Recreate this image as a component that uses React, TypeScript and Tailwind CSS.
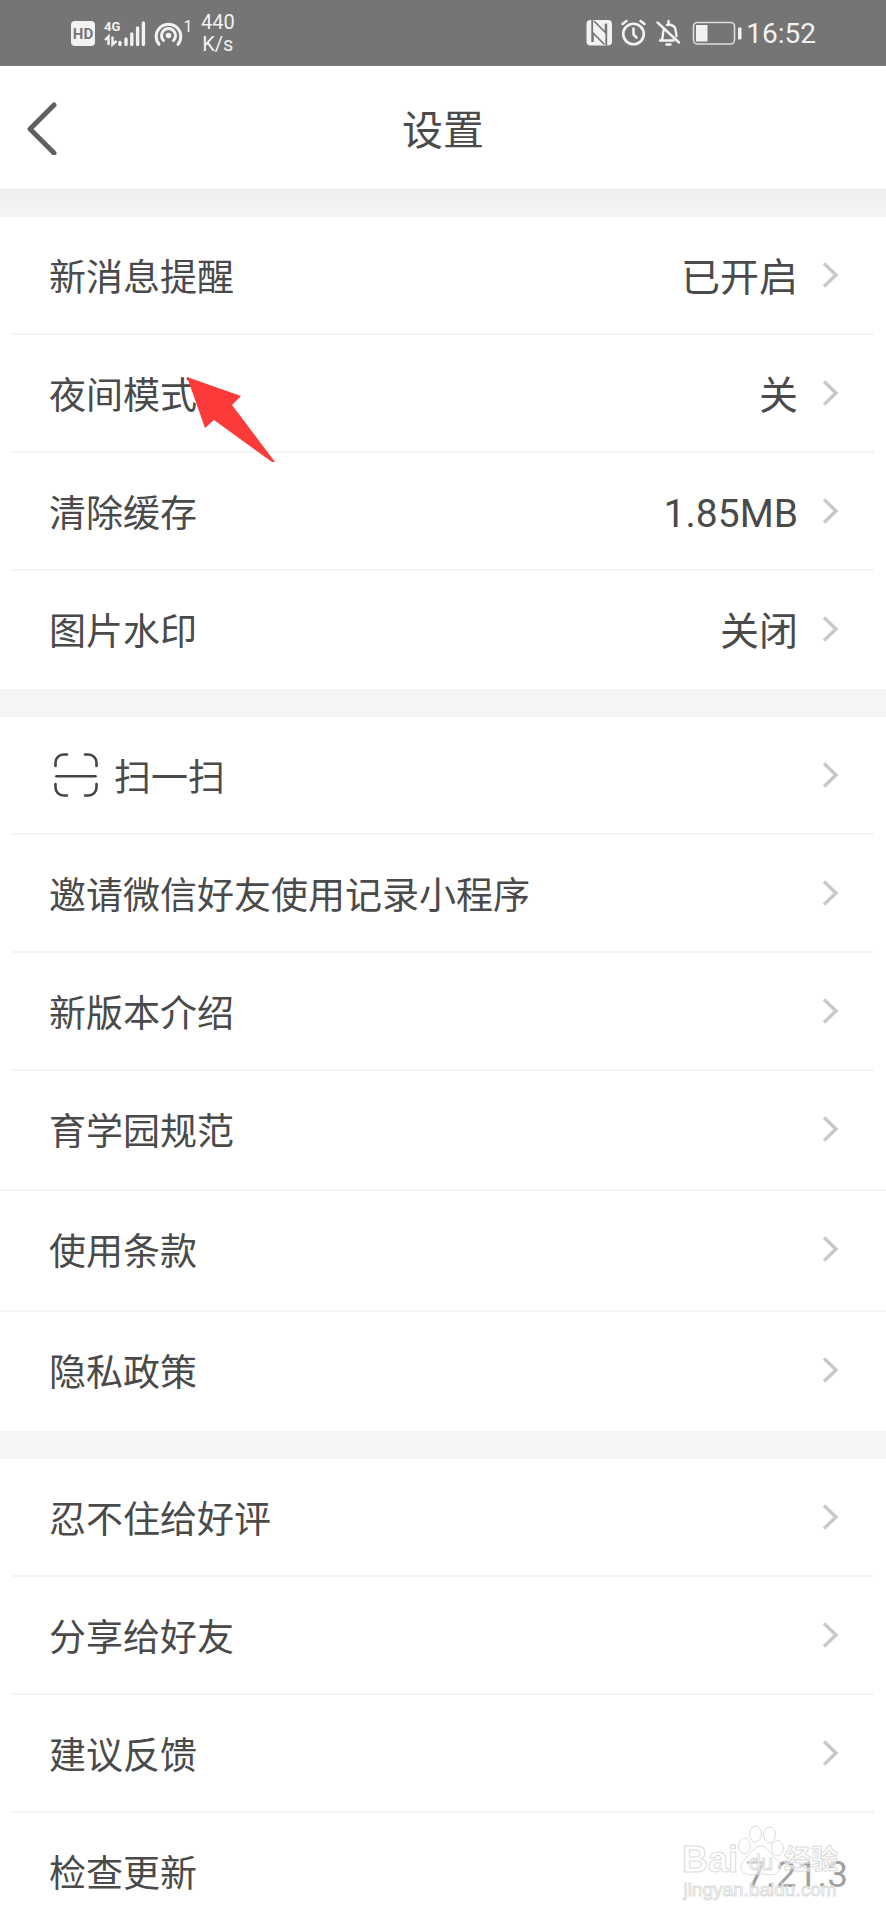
import type { ReactNode } from "react";

type Item = {
  label: string;
  value?: string;
  version?: string;
  icon?: ReactNode;
  wide?: boolean;
  pointer?: boolean;
};

function ScanIcon() {
  return (
    <svg width="44" height="44" viewBox="0 0 44 44" fill="none" stroke="#444" strokeWidth="2.6" strokeLinecap="round" aria-hidden="true">
      <path d="M1.5 13V9.5a8 8 0 0 1 8-8H13M31 1.500h3.500a8 8 0 0 1 8 8V13M42.500 31v3.500a8 8 0 0 1-8 8H31M13 42.500H9.500a8 8 0 0 1-8-8V31" />
      <path d="M2.500 23.300h39" />
    </svg>
  );
}

const sections: Item[][] = [
  [
    { label: "新消息提醒", value: "已开启" },
    { label: "夜间模式", value: "关", pointer: true },
    { label: "清除缓存", value: "1.85MB" },
    { label: "图片水印", value: "关闭" },
  ],
  [
    { label: "扫一扫", icon: <ScanIcon /> },
    { label: "邀请微信好友使用记录小程序" },
    { label: "新版本介绍" },
    { label: "育学园规范" },
    { label: "使用条款", wide: true },
    { label: "隐私政策", wide: true },
  ],
  [
    { label: "忍不住给好评" },
    { label: "分享给好友" },
    { label: "建议反馈" },
    { label: "检查更新", version: "7.21.3" },
  ],
];

function StatusBar() {
  return (
    <div className="flex h-[66px] shrink-0 items-center justify-between bg-[#757575] pr-[70px] pl-[71px] font-[Roboto,sans-serif] text-[#f2f2f2]">
      <div className="flex items-center">
        <svg width="122" height="30" viewBox="0 0 122 30" aria-hidden="true">
          <rect x="0" y="3" width="24" height="25" rx="4" fill="#f2f2f2" />
          <text x="12" y="21" textAnchor="middle" fontSize="15" fontWeight="700" fill="#757575">HD</text>
          <text x="33" y="13" fontSize="13" fontWeight="700" fill="#f2f2f2">4G</text>
          <path d="M37.500 27V18.500l-3.500 3.500M41.500 18.500v8l4-3.500" fill="none" stroke="#f2f2f2" strokeWidth="2.400" />
          <path d="M49 24.500v2M55 21v5.500M60.800 16v10.500M66.600 10v16.500M72.400 5v21.500" stroke="#f2f2f2" strokeWidth="3.400" strokeLinecap="round" />
          <g fill="none" stroke="#f2f2f2" strokeWidth="3" strokeLinecap="round">
            <path d="M88 26.300A12.300 12.300 0 1 1 107 26.300" />
            <path d="M92.500 22.500A7 7 0 1 1 102.500 22.500" />
          </g>
          <circle cx="97.500" cy="17.500" r="2.800" fill="#f2f2f2" />
          <text x="112.500" y="14" fontSize="16" fill="#f2f2f2">1</text>
        </svg>
        <div className="ml-2 flex flex-col items-center text-[20px] leading-[22px]">
          <span>440</span>
          <span>K/s</span>
        </div>
      </div>
      <div className="flex items-center gap-1">
        <svg width="156" height="28" viewBox="0 0 156 28" fill="none" stroke="#f2f2f2" aria-hidden="true">
          <rect x="0.500" y="1" width="25.500" height="25.500" rx="4" fill="#f2f2f2" stroke="none" />
          <path d="M6.200 1v22M20.300 4.500v22" stroke="#757575" strokeWidth="1.800" />
          <path d="M8 2l11.500 11.500V5M18.500 25.500L7 14v9" stroke="#757575" strokeWidth="1.600" />
          <g strokeWidth="2.600" strokeLinecap="round">
            <circle cx="47.500" cy="15" r="10.300" />
            <path d="M47.500 9.500v6l3 3M36.500 5l4-3M58.500 5l-4-3" />
          </g>
          <g strokeWidth="2.400" strokeLinecap="round" strokeLinejoin="round">
            <path d="M71.500 3.500L93 23.500M74 21.500h13.500M75.500 21c1.500-2 1.500-4 1.500-6.500 0-2 .5-3.500 1.500-5M90.500 17c-1-8.500-1.500-10.500-7.500-11.500a4 4 0 0 0-2 .5M82.500 5V2" />
            <path d="M80.500 25.500h4" />
          </g>
          <rect x="107.500" y="3.500" width="41" height="21.500" rx="4" strokeWidth="1.600" stroke="#ddd" />
          <rect x="110" y="6" width="11.500" height="16.500" fill="#f2f2f2" stroke="none" />
          <rect x="152" y="8.500" width="3.500" height="12" rx="1" fill="#f2f2f2" stroke="none" />
        </svg>
        <time className="pt-0.5 text-[28px] leading-8">16:52</time>
      </div>
    </div>
  );
}

function Chevron() {
  return (
    <svg className="shrink-0" width="18" height="26" viewBox="0 0 18 26" fill="none" stroke="#c8c8c8" strokeWidth="3.4" aria-hidden="true">
      <path d="M2 1.500L14 13L2 24.500" />
    </svg>
  );
}

function Pointer() {
  return (
    <svg className="absolute top-[42px] left-[187px] z-10" width="88" height="86" viewBox="0 0 88 86" fill="#fc3a3a" aria-hidden="true">
      <path d="M0 0L54 19L45 28L88 85H85L27 43L18 51Z" />
    </svg>
  );
}

function Watermark() {
  return (
    <div aria-hidden="true" className="pointer-events-none absolute right-12 bottom-[18px] flex flex-col items-center font-[Liberation_Sans,Noto_Sans_CJK_SC,sans-serif] text-white/50 [-webkit-text-stroke:1px_#dcdcdc]">
      <div className="flex h-[54px] items-end text-[36px] leading-[36px] font-bold">
        <span>Bai</span>
        <svg width="46" height="54" viewBox="0 0 46 54" fill="#ffffff" fillOpacity="0.5" stroke="#dcdcdc" strokeWidth="1">
          <ellipse cx="6.500" cy="22" rx="6" ry="8" />
          <ellipse cx="17.500" cy="10" rx="6" ry="8" />
          <ellipse cx="31.500" cy="11" rx="6" ry="8" />
          <ellipse cx="39.500" cy="24" rx="6" ry="7.500" />
          <path d="M23 22c6 0 8 6 13 11 6 5 8 9 5 14-4 6-12 3-18 3S8 53 4 47c-3-5 0-9 5-14 5-5 8-11 14-11Z" />
          <text x="23" y="46" textAnchor="middle" fontSize="22" fontWeight="400">du</text>
        </svg>
        <span className="text-[27px]">经验</span>
      </div>
      <span className="text-[19px] leading-6">jingyan.baidu.com</span>
    </div>
  );
}

function Row({ item, last }: { item: Item; last: boolean }) {
  const size = item.wide ? "h-[121px] border-t-2 border-[#f4f4f4] pb-1" : "h-[118px]";
  return (
    <li className={`relative flex flex-col ${size}`}>
      <button type="button" className="flex w-full flex-1 items-center pr-[46px] pl-[49px] text-left">
        {item.icon && <span className="mr-4 ml-[5px]">{item.icon}</span>}
        <span className="pt-2 text-[37px] leading-[52px]">{item.label}</span>
        {item.value && <span className="mr-6 ml-auto pt-1.5 text-[39px] leading-[52px]">{item.value}</span>}
        {item.version ? (
          <span className="-mr-2 ml-auto pt-2 text-[37px] leading-[52px] text-[#a0a0a0]">{item.version}</span>
        ) : (
          <span className={item.value ? "" : "ml-auto"}>
            <Chevron />
          </span>
        )}
      </button>
      {!item.wide && <span className={`mx-3 h-0.5 ${last ? "" : "bg-[#f4f4f4]"}`} />}
      {item.pointer && <Pointer />}
    </li>
  );
}

export default function App() {
  return (
    <div className="relative flex h-screen flex-col overflow-hidden bg-white font-[Roboto,Noto_Sans_CJK_SC,sans-serif] text-[#4a4a4a]">
      <StatusBar />
      <header className="grid h-[123px] shrink-0 grid-cols-[1fr_auto_1fr] items-center">
        <button type="button" aria-label="返回" className="justify-self-start pl-[26px]">
          <svg width="32" height="54" viewBox="0 0 32 54" fill="none" stroke="#606060" strokeWidth="5" strokeLinecap="round" strokeLinejoin="round" aria-hidden="true">
            <path d="M28 4L4 28L28 52" />
          </svg>
        </button>
        <h1 className="pt-1.5 text-[41px] leading-[60px]">设置</h1>
      </header>
      <main className="flex-1 overflow-y-auto [scrollbar-width:none]">
        {sections.map((items, s) => (
          <section key={s}>
            <div className={s === 0 ? "h-7 bg-linear-to-b from-[#eeeeee] to-[#f4f6f3]" : "h-7 bg-[#f4f6f3]"} />
            <ul>
              {items.map((item, i) => (
                <Row key={item.label} item={item} last={i === items.length - 1 || Boolean(items[i + 1].wide)} />
              ))}
            </ul>
          </section>
        ))}
      </main>
      <Watermark />
    </div>
  );
}
